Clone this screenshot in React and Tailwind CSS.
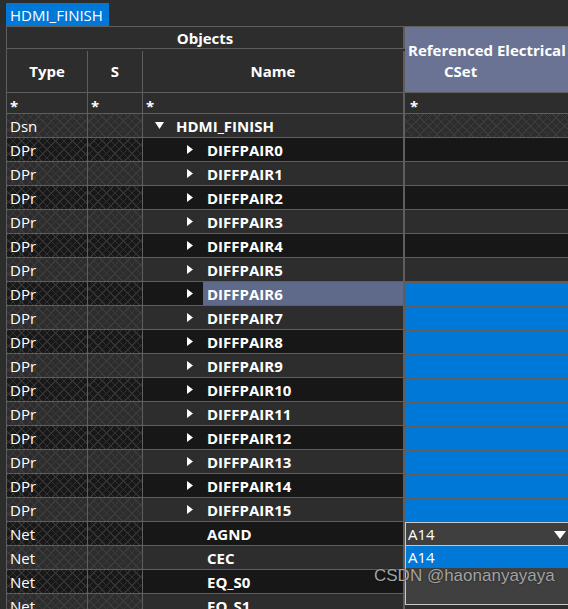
import React from "react";

const FONT = { fontFamily: '"Open Sans", "Noto Sans", sans-serif' };

const checkGray =
  "bg-[#2d2d2d] bg-[image:repeating-linear-gradient(45deg,#3b3b3b_0_1px,transparent_1px_6px),repeating-linear-gradient(-45deg,#3b3b3b_0_1px,transparent_1px_6px)]";
const checkDark =
  "bg-[#181818] bg-[image:repeating-linear-gradient(45deg,#333333_0_1px,transparent_1px_6px),repeating-linear-gradient(-45deg,#333333_0_1px,transparent_1px_6px)]";

const rows = [
  { type: "Dsn", name: "HDMI_FINISH", kind: "dsn" },
  ...Array.from({ length: 16 }, (_, i) => ({ type: "DPr", name: `DIFFPAIR${i}`, kind: "dpr" })),
  { type: "Net", name: "AGND", kind: "net" },
  { type: "Net", name: "CEC", kind: "net" },
  { type: "Net", name: "EQ_S0", kind: "net" },
  { type: "Net", name: "EQ_S1", kind: "net" },
];

const TriDown = () => (
  <svg width="9" height="7" viewBox="0 0 9 7" className="shrink-0">
    <path d="M0 0 H9 L4.5 7 Z" fill="#fff" />
  </svg>
);

const TriRight = () => (
  <svg width="6" height="9" viewBox="0 0 6 9" className="shrink-0">
    <path d="M0 0 L6 4.5 L0 9 Z" fill="#fff" />
  </svg>
);

const Row = ({ row, index }) => {
  const dark = index % 2 === 1;
  const plain = dark ? "bg-[#171717]" : "bg-[#2d2d2d]";
  const selected = row.name === "DIFFPAIR6";
  const blue = index >= 7 && index <= 16;

  let refCell;
  if (index === 0) {
    refCell = <div className={`h-[23px] ${checkGray}`} />;
  } else if (row.name === "AGND") {
    refCell = (
      <div className="flex h-[24px] items-center justify-between border border-[#c8c8c8] bg-[#3f3f3f] pl-[2px] pr-[4px] pt-px">
        <span>A14</span>
        <svg width="12" height="8" viewBox="0 0 12 8">
          <path d="M0 0 H12 L6 8 Z" fill="#fff" />
        </svg>
      </div>
    );
  } else if (blue) {
    refCell = <div className="ml-px mt-px h-[22px] bg-[#0078d7]" />;
  } else {
    refCell = <div className={`h-[23px] ${plain}`} />;
  }

  return (
    <div className="flex h-[24px]">
      <div className={`flex w-[81px] shrink-0 items-center border-b border-r border-[#5e5e5e] pl-[3px] pt-[2px] ${dark ? checkDark : checkGray}`}>
        {row.type}
      </div>
      <div className={`w-[55px] shrink-0 border-b border-r border-[#5e5e5e] ${dark ? checkDark : checkGray}`} />
      <div className={`flex w-[262px] shrink-0 items-center border-b border-r-2 border-[#5e5e5e] font-bold ${plain}`}>
        {row.kind === "dsn" ? (
          <>
            <span className="ml-[12px] mr-[12px] flex items-center">
              <TriDown />
            </span>
            <span className="pt-[2px]">{row.name}</span>
          </>
        ) : (
          <>
            <span className="flex w-[60px] items-center pl-[44px]">
              {row.kind === "dpr" && <TriRight />}
            </span>
            <span className={`flex h-full flex-1 items-center pl-[4px] pt-[2px] ${selected ? "bg-[#5f6a8b]" : ""}`}>
              {row.name}
            </span>
          </>
        )}
      </div>
      <div className="h-[24px] w-[166px] shrink-0 bg-[#5e5e5e]">{refCell}</div>
    </div>
  );
};

export default function App() {
  return (
    <div
      className="relative h-[609px] w-[568px] overflow-hidden bg-[#2d2d2d] text-[15px] leading-none text-white"
      style={FONT}
    >
      <div className="ml-[6px] mt-[3px] flex h-[23px] w-[103px] items-center bg-[#0078d7] pl-[4px] pt-px text-[15px]">
        HDMI_FINISH
      </div>

      <div className="ml-[6px] w-[600px] border-l border-t border-[#5e5e5e]">
        {/* header */}
        <div className="flex border-b border-[#5e5e5e] font-bold">
          <div className="w-[398px] shrink-0">
            <div className="flex h-[22px] items-center justify-center border-b border-r-2 border-[#5e5e5e] pt-[2px]">
              Objects
            </div>
            <div className="flex h-[43px] pt-[2px]">
              <div className="flex w-[81px] items-center justify-center border-r border-[#5e5e5e]">Type</div>
              <div className="flex w-[55px] items-center justify-center border-r border-[#5e5e5e]">S</div>
              <div className="flex w-[262px] items-center justify-center border-r-2 border-[#5e5e5e]">Name</div>
            </div>
          </div>
          <div className="flex w-[166px] shrink-0 flex-col justify-center gap-[6px] bg-[#6a7394] pl-[3px] pt-[2px]">
            <span className="whitespace-nowrap">Referenced Electrical</span>
            <span className="pl-[36px]">CSet</span>
          </div>
        </div>

        {/* filter row */}
        <div className="flex h-[21px] border-b border-[#5e5e5e] font-bold">
          <div className="w-[81px] border-r border-[#5e5e5e] pl-[3px] pt-[6px]">*</div>
          <div className="w-[55px] border-r border-[#5e5e5e] pl-[3px] pt-[6px]">*</div>
          <div className="w-[262px] border-r-2 border-[#5e5e5e] pl-[3px] pt-[6px]">*</div>
          <div className="w-[166px] pl-[5px] pt-[6px]">*</div>
        </div>

        {rows.map((row, i) => (
          <Row key={row.name} row={row} index={i} />
        ))}
      </div>

      {/* open dropdown list */}
      <div className="absolute left-[405px] top-[545px] h-[60px] w-[166px] border border-[#c8c8c8] bg-[#404040]">
        <div className="flex h-[22px] items-center bg-[#0078d7] pl-[2px] pt-px">A14</div>
      </div>

      {/* watermark */}
      <div
        className="absolute left-[374px] top-[567px] text-[17px] text-[#a3a3a3] [text-shadow:0_0_2px_rgba(0,0,0,0.6)]"
        style={{ fontFamily: '"Liberation Sans", Arial, sans-serif' }}
      >
        CSDN @haonanyayaya
      </div>
    </div>
  );
}
